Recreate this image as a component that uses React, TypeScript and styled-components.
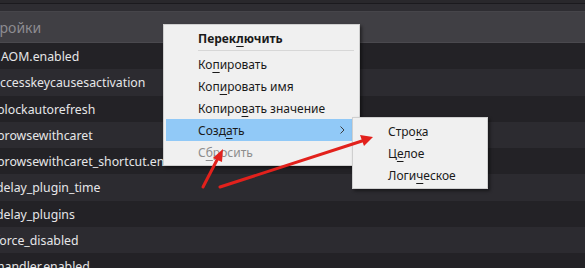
import React from 'react';
import styled, { createGlobalStyle } from 'styled-components';

const GlobalStyle = createGlobalStyle`
  html, body {
    margin: 0;
    padding: 0;
    background: #232226;
    overflow: hidden;
  }
  body {
    font-family: "Noto Sans", "DejaVu Sans", sans-serif;
  }
`;

const Page = styled.div`
  position: relative;
  width: 585px;
  height: 268px;
  overflow: hidden;
  background: #232226;
`;

const TopStrip = styled.div`
  height: 3px;
  background: #29282c;
  border-bottom: 1px solid #1b1a1e;
`;

const Toolbar = styled.div`
  height: 7px;
  background: #2e2d32;
  border-bottom: 1px solid #46454a;
`;

const Header = styled.div`
  height: 30px;
  display: flex;
  align-items: center;
  background: #403f44;
  border-bottom: 1px solid #4a494e;
  color: #8d8c91;
  font-size: 14px;
  overflow: hidden;
`;

const HeaderText = styled.span`
  margin-left: -32px;
  white-space: nowrap;
`;

const List = styled.div`
  display: flex;
  flex-direction: column;
`;

const Row = styled.div<{ $odd: boolean }>`
  height: 26.25px;
  display: flex;
  align-items: center;
  background: ${p => (p.$odd ? '#2c2b30' : '#232226')};
  overflow: hidden;
`;

const Name = styled.span<{ $shift: number }>`
  margin-left: ${p => p.$shift}px;
  margin-top: 1px;
  color: #e6e6e8;
  font-size: 12.3px;
  white-space: nowrap;
`;

const Menu = styled.div<{ $x: number; $y: number; $w: number }>`
  position: absolute;
  left: ${p => p.$x}px;
  top: ${p => p.$y}px;
  width: ${p => p.$w}px;
  box-sizing: border-box;
  padding: 2px;
  background: #f0f0f0;
  border: 1px solid #cfcfcf;
  box-shadow: 2px 2px 3px rgba(0, 0, 0, 0.45);
  font-size: 12px;
  color: #1a1a1a;
`;

const Item = styled.div<{ $active?: boolean; $disabled?: boolean; $bold?: boolean; $indent: number }>`
  position: relative;
  height: 22px;
  display: flex;
  align-items: center;
  padding-left: ${p => p.$indent}px;
  background: ${p => (p.$active ? '#91c9f7' : 'transparent')};
  color: ${p => (p.$disabled ? '#8d8d8d' : '#1a1a1a')};
  font-weight: ${p => (p.$bold ? 700 : 400)};
  white-space: nowrap;

  u {
    text-decoration-thickness: 1px;
    text-underline-offset: 3px;
  }
`;

const Separator = styled.div`
  height: 1px;
  margin: 1px 3px 2px 32px;
  background: #d7d7d7;
`;

const Chevron = styled.svg`
  position: absolute;
  right: 12px;
  top: 7px;
`;

const Arrows = styled.svg`
  position: absolute;
  left: 0;
  top: 0;
  pointer-events: none;
`;

const names: [string, number][] = [
  ['AOM.enabled', 1],
  ['ccesskeycausesactivation', 0],
  ['blockautorefresh', -3],
  ['browsewithcaret', -3],
  ['browsewithcaret_shortcut.enabled', -3],
  ['delay_plugin_time', -4],
  ['delay_plugins', -4],
  ['force_disabled', -5],
  ['handler.enabled', -3],
];

const Label: React.FC<{ text: string; at: number }> = ({ text, at }) => (
  <span>
    {text.slice(0, at)}
    <u>{text[at]}</u>
    {text.slice(at + 1)}
  </span>
);

export default function App() {
  return (
    <Page>
      <GlobalStyle />
      <TopStrip />
      <Toolbar />
      <Header>
        <HeaderText>Настройки</HeaderText>
      </Header>
      <List>
        {names.map(([n, s], i) => (
          <Row key={n} $odd={i % 2 === 1}>
            <Name $shift={s}>{n}</Name>
          </Row>
        ))}
      </List>

      <Menu $x={163} $y={24} $w={197}>
        <Item $bold $indent={32}>
          <Label text="Переключить" at={5} />
        </Item>
        <Separator />
        <Item $indent={32}>
          <Label text="Копировать" at={2} />
        </Item>
        <Item $indent={32}>
          <Label text="Копировать имя" at={3} />
        </Item>
        <Item $indent={32}>
          <Label text="Копировать значение" at={6} />
        </Item>
        <Item $active $indent={32}>
          <Label text="Создать" at={4} />
          <Chevron width="5" height="8" viewBox="0 0 5 8">
            <path d="M0.5 0.5 L4 4 L0.5 7.5" fill="none" stroke="#3c3c3c" strokeWidth="1" />
          </Chevron>
        </Item>
        <Item $disabled $indent={32}>
          <Label text="Сбросить" at={1} />
        </Item>
      </Menu>

      <Menu $x={352} $y={117} $w={136}>
        <Item $indent={33}>
          <Label text="Строка" at={4} />
        </Item>
        <Item $indent={33}>
          <Label text="Целое" at={1} />
        </Item>
        <Item $indent={33}>
          <Label text="Логическое" at={4} />
        </Item>
      </Menu>

      <Arrows width="585" height="268" viewBox="0 0 585 268">
        <g stroke="#e2211c" strokeWidth="3" strokeLinecap="round" fill="#e2211c">
          <line x1="203" y1="187" x2="218" y2="158" />
          <polygon points="223,149 213,158 222,162" stroke="none" />
          <line x1="220" y1="187" x2="362" y2="141" />
          <polygon points="373,137 360,135 364,146" stroke="none" />
        </g>
      </Arrows>
    </Page>
  );
}
